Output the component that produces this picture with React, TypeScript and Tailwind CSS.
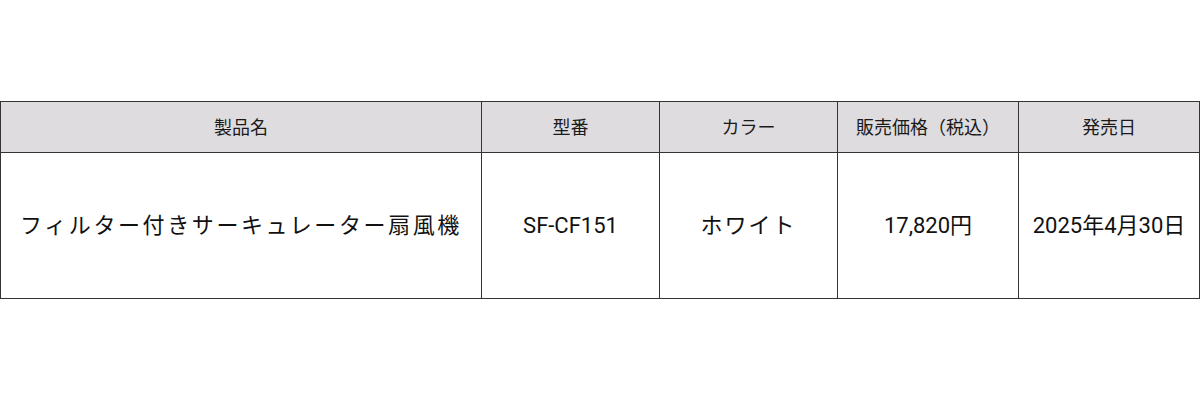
const headers = ['製品名', '型番', 'カラー', '販売価格（税込）', '発売日'];

const row = {
  name: 'フィルター付きサーキュレーター扇風機',
  model: 'SF-CF151',
  color: 'ホワイト',
  price: '17,820円',
  date: '2025年4月30日',
};

const colWidths = ['w-[481px]', 'w-[178px]', 'w-[178px]', 'w-[181px]', 'w-[181px]'];

export default function App() {
  return (
    <div
      className="flex h-[400px] w-[1200px] items-center bg-white"
      style={{ fontFamily: 'Roboto, "Noto Sans CJK JP", sans-serif' }}
    >
      <table className="w-[1199px] table-fixed border-collapse text-[#111]">
        <colgroup>
          {colWidths.map((w, i) => (
            <col key={i} className={w} />
          ))}
        </colgroup>
        <thead>
          <tr className="h-[51px] bg-[#dedcdf]">
            {headers.map((h) => (
              <th key={h} className="border border-[#333] text-center text-[18px] font-normal text-[#1a1a1a]">
                {h}
              </th>
            ))}
          </tr>
        </thead>
        <tbody>
          <tr className="h-[146px]">
            <td className="border border-[#333] text-center text-[22px] tracking-[2.6px]">{row.name}</td>
            <td className="border border-[#333] text-center text-[22px]">{row.model}</td>
            <td className="border border-[#333] text-center text-[22px] tracking-[2px]">{row.color}</td>
            <td className="border border-[#333] text-center text-[22px]">{row.price}</td>
            <td className="border border-[#333] text-center text-[22px]">{row.date}</td>
          </tr>
        </tbody>
      </table>
    </div>
  );
}
